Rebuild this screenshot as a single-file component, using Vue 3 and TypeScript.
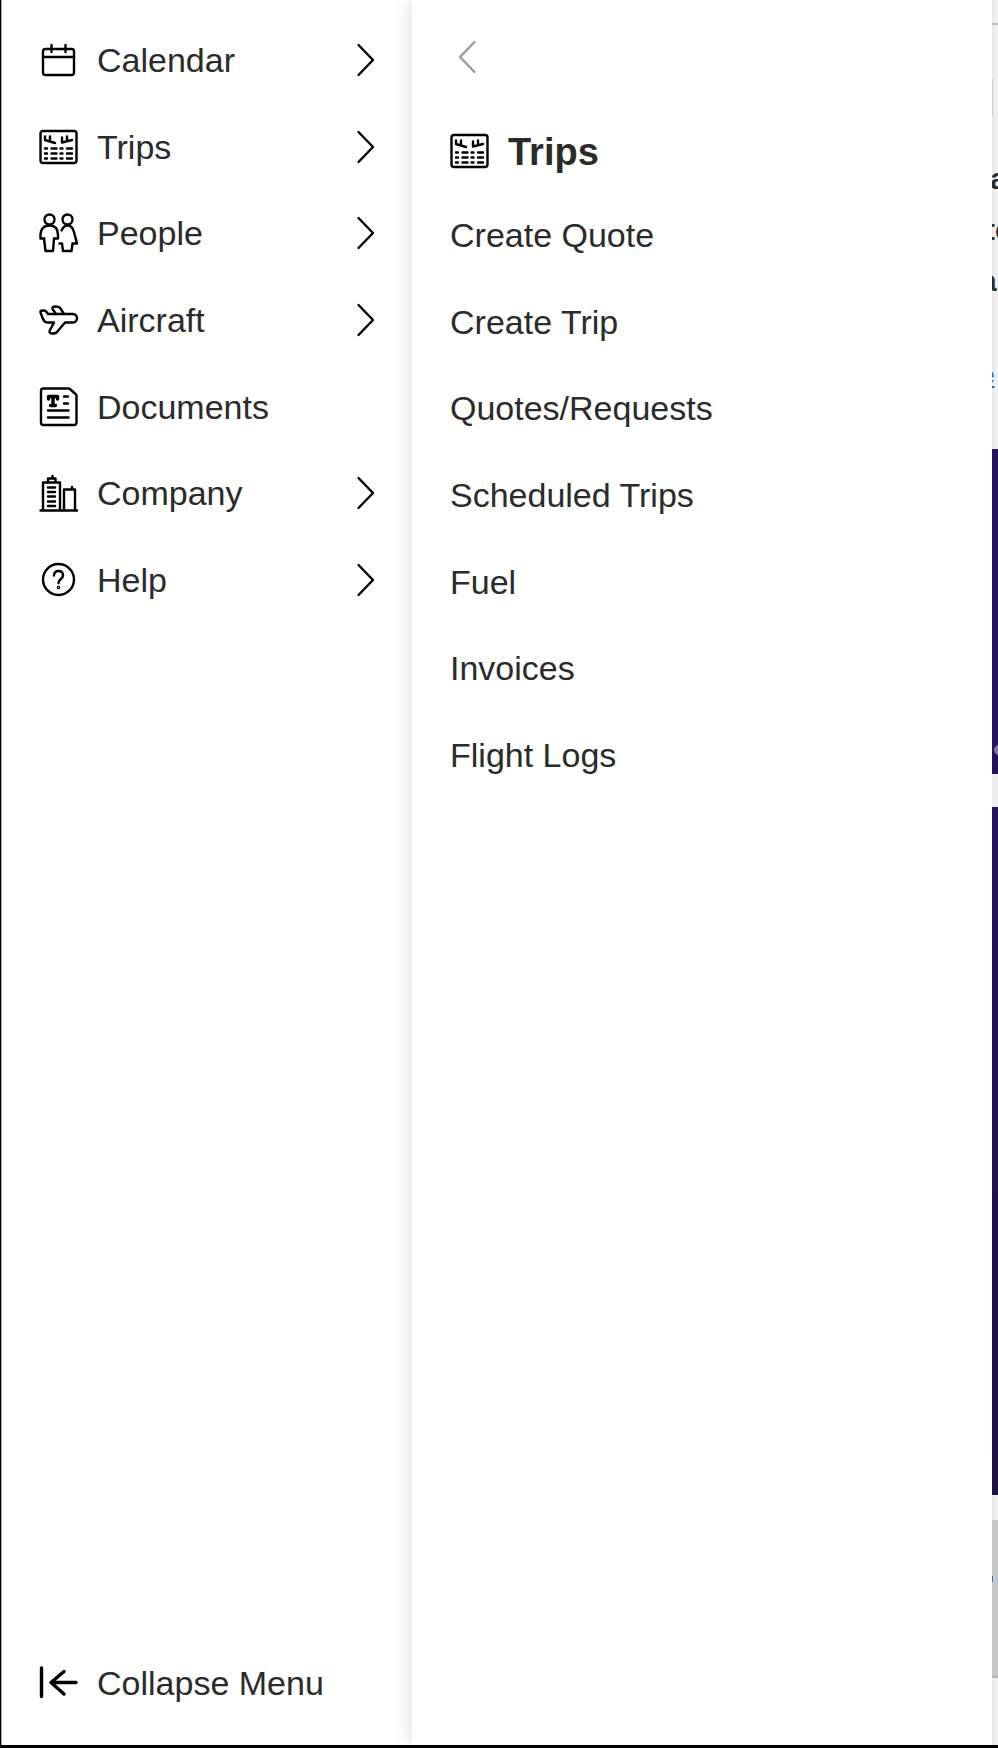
<script setup lang="ts">
type IconName = 'calendar' | 'trips' | 'people' | 'aircraft' | 'documents' | 'company' | 'help'

interface MenuItem {
  label: string
  icon: IconName
  expandable: boolean
}

const menu: MenuItem[] = [
  { label: 'Calendar', icon: 'calendar', expandable: true },
  { label: 'Trips', icon: 'trips', expandable: true },
  { label: 'People', icon: 'people', expandable: true },
  { label: 'Aircraft', icon: 'aircraft', expandable: true },
  { label: 'Documents', icon: 'documents', expandable: false },
  { label: 'Company', icon: 'company', expandable: true },
  { label: 'Help', icon: 'help', expandable: true },
]

const tripLinks: string[] = [
  'Create Quote',
  'Create Trip',
  'Quotes/Requests',
  'Scheduled Trips',
  'Fuel',
  'Invoices',
  'Flight Logs',
]
</script>

<template>
  <svg class="sprite" aria-hidden="true">
    <symbol id="icon-calendar" viewBox="0 0 40 40">
      <rect x="4" y="9" width="31" height="26" rx="2.5" />
      <path d="M4 17H35M12.5 5v7M26.5 5v7" />
    </symbol>
    <symbol id="icon-trips" viewBox="0 0 40 40">
      <rect x="1.5" y="4" width="36" height="32" rx="2.5" />
      <path d="M6 9.500V13L16 16M11 9.500V14M23 10.500V15.500L33 13M28 9.500V14" />
      <path d="M6 21.500h2M12.500 21.500h5M21.500 21.500h2M28 21.500h5M6 26.500h2M12.500 26.500h5M21.500 26.500h2M28 26.500h5M6 31.500h2M12.500 31.500h5M21.500 31.500h2M28 31.500h5" />
    </symbol>
    <symbol id="icon-people" viewBox="0 0 40 40">
      <circle cx="10.5" cy="6.500" r="5" />
      <circle cx="28.5" cy="6.500" r="5" />
      <path d="M5.500 25.500H1.500V22C1.500 16 5 12.500 10.500 12.500S19 16 19 22V25.500H15L14 38H6.500L5 25.500" />
      <path d="M22.500 17.500C24 14 26 12.500 28.500 12.500C32 12.500 34 15 35 19L38 30.500H33.500L32.500 38H24L23 30.500H20.500" />
    </symbol>
    <symbol id="icon-aircraft" viewBox="0 0 40 40">
      <path d="M9 14H34C36.500 14 38 16 38 18S36.500 22.500 34 22.500H26L18 32C17 33.500 15.500 33.500 13 33.500C10.500 33.500 10 32 11 30L15 22.500H9C6.500 22.500 5 21.500 4 19L1.500 12.500C1 10.500 3 10.500 5 10.500C6.500 10.500 7 11 7.500 12Z" />
      <path d="M17 14L13.500 9C13 7 14 6.500 17 6.500C19.500 6.500 20.500 7 21.500 8.500L25 14" />
    </symbol>
    <symbol id="icon-documents" viewBox="0 0 40 40">
      <path d="M4.500 1.500H29.500Q31 1.500 32 3L36 6.500Q37.500 7.500 37.500 9V35.500Q37.500 38 35 38H4.500Q2 38 2 35.500V4Q2 1.500 4.500 1.500Z" />
      <path d="M25 9.500H29M25 16.500H29M9 23.500H29.500M9 30.500H29.500" />
      <path d="M9.500 12V9.500H18.500V12M14 9.500V18.500M11.500 18.500H16.500" class="bold" />
    </symbol>
    <symbol id="icon-company" viewBox="0 0 40 40">
      <path d="M1.500 37.500H38M4 37V9.500H21V37M25 37V16.500H36V37M33 16V14M9 9V5.500H16.500V9M13.500 5V3" />
      <path d="M9 14.500H16M9 19H16M9 23.500H16M9 28.500H16M9 33H16" />
    </symbol>
    <symbol id="icon-help" viewBox="0 0 40 40">
      <circle cx="19.5" cy="19.500" r="15.500" />
      <path d="M15 15.500C15 12.500 17 11 19.500 11S24 12.500 24 15.500C24 19 19.500 19 19.500 23" />
      <circle cx="19.5" cy="27.500" r=".6" />
    </symbol>
    <symbol id="icon-collapse" viewBox="0 0 40 40">
      <path d="M2.500 5V33.500M37 19.500H12M25 8.500L12 19.500L25 31" class="bold" />
    </symbol>
    <symbol id="icon-chevron" viewBox="0 0 20 34">
      <path d="M2.500 2L17 17L2.500 32" />
    </symbol>
  </svg>

  <div class="page">
    <nav class="sidebar" aria-label="Main menu">
      <ul class="rows">
        <li v-for="item in menu" :key="item.label">
          <button type="button" class="row">
            <svg class="icon"><use :href="`#icon-${item.icon}`" /></svg>
            <span class="label">{{ item.label }}</span>
            <svg v-if="item.expandable" class="chevron"><use href="#icon-chevron" /></svg>
          </button>
        </li>
      </ul>
      <button type="button" class="row collapse">
        <svg class="icon"><use href="#icon-collapse" /></svg>
        <span class="label">Collapse Menu</span>
      </button>
    </nav>

    <nav class="submenu" aria-label="Trips">
      <button type="button" class="back" aria-label="Back">
        <svg class="chevron flipped"><use href="#icon-chevron" /></svg>
      </button>
      <h2 class="title">
        <svg class="icon"><use href="#icon-trips" /></svg>
        <span class="title-text">Trips</span>
      </h2>
      <ul class="rows">
        <li v-for="link in tripLinks" :key="link">
          <a href="#" class="sublink">{{ link }}</a>
        </li>
      </ul>
    </nav>

    <main class="content">
      <div class="topbar"></div>
      <div class="intro">
        <div class="field"></div>
        <p class="line">a</p>
        <p class="line shifted">te</p>
        <p class="line half">a</p>
        <a href="#" class="more">e</a>
      </div>
      <div class="hero upper"><span class="dot"></span></div>
      <div class="band"></div>
      <div class="hero lower"></div>
      <div class="gap"></div>
      <div class="card"><span class="mark"></span></div>
    </main>
  </div>
</template>

<style>
body {
  margin: 0;
}
</style>

<style scoped>
.sprite {
  position: absolute;
  width: 0;
  height: 0;
}

.page {
  box-sizing: border-box;
  display: flex;
  min-height: 100vh;
  border-left: 1px solid #000;
  border-bottom: 3px solid #000;
  background: #fff;
  color: #2b2b2b;
  font-family: "Liberation Sans", Arial, sans-serif;
  font-size: 34px;
  line-height: 40px;
}

.sidebar {
  box-sizing: border-box;
  flex: 0 0 411px;
  display: flex;
  flex-direction: column;
  justify-content: space-between;
  padding: 17px 0 19px;
  border-left: 1px solid #aaa;
}

.rows {
  display: grid;
  grid-auto-rows: 1fr;
  min-height: 606px;
  margin: 0;
  padding: 0;
  list-style: none;
}

.rows li {
  display: flex;
}

.row {
  box-sizing: border-box;
  flex: 1;
  display: flex;
  align-items: center;
  gap: 18px;
  padding: 0 36px 0 37px;
  border: 0;
  background: none;
  color: inherit;
  font: inherit;
  text-align: left;
}

.collapse {
  flex: 0 0 87px;
}

.label {
  flex: 1;
}

.icon,
.chevron {
  flex: none;
  fill: none;
  stroke: #000;
  stroke-width: 2.4;
  stroke-linecap: round;
  stroke-linejoin: round;
}

.icon {
  width: 40px;
  height: 40px;
}

.bold {
  stroke-width: 3.4;
}

.chevron {
  width: 20px;
  height: 34px;
}

.submenu {
  box-sizing: border-box;
  position: relative;
  z-index: 1;
  flex: 1;
  padding: 40px 38px;
  background: #fff;
  box-shadow: 0 0 16px rgba(0, 0, 0, 0.16);
  clip-path: inset(0 0 0 -24px);
}

.back {
  display: block;
  padding: 0 7px;
  border: 0;
  background: none;
}

.back .chevron {
  display: block;
  stroke: #999;
}

.flipped {
  transform: scaleX(-1);
}

.title {
  display: flex;
  align-items: center;
  gap: 18px;
  margin: 56px 0 20px;
  font-size: 38px;
  line-height: 40px;
}

.title-text {
  padding-top: 2px;
}

.sublink {
  flex: 1;
  display: flex;
  align-items: center;
  color: inherit;
  text-decoration: none;
}

.content {
  flex: 0 0 6px;
  display: flex;
  flex-direction: column;
  overflow: hidden;
  background: linear-gradient(90deg, #e8e8e8, #f3f3f3);
}

.topbar {
  height: 23px;
  border-bottom: 2px solid #bbb;
}

.intro {
  height: 424px;
}

.field {
  width: 1px;
  height: 37px;
  margin: 54px 0 43px;
  background: #ccc;
}

.line {
  margin: 0 0 11px;
  font-size: 30px;
  font-weight: bold;
  text-indent: -2px;
  white-space: nowrap;
}

.shifted {
  text-indent: -7px;
}

.half {
  text-indent: -12px;
}

.more {
  display: block;
  margin-top: 54px;
  color: #2463d6;
  font-size: 26px;
  font-weight: bold;
  text-indent: -12px;
}

.hero {
  box-sizing: border-box;
  background: #25145c;
}

.upper {
  height: 325px;
  padding-top: 296px;
}

.dot {
  display: block;
  width: 10px;
  height: 10px;
  margin-left: 2px;
  border-radius: 5px;
  background: #80779f;
}

.band {
  height: 33px;
  background: #eee;
}

.lower {
  height: 688px;
  background: linear-gradient(#25145c, #1d1340);
}

.gap {
  height: 25px;
}

.card {
  box-sizing: border-box;
  height: 158px;
  padding-top: 56px;
  border-bottom: 3px solid #b8b8b8;
  background: #c8c8c8;
}

.mark {
  display: block;
  width: 1px;
  height: 6px;
  background: #2d70dd;
}
</style>
